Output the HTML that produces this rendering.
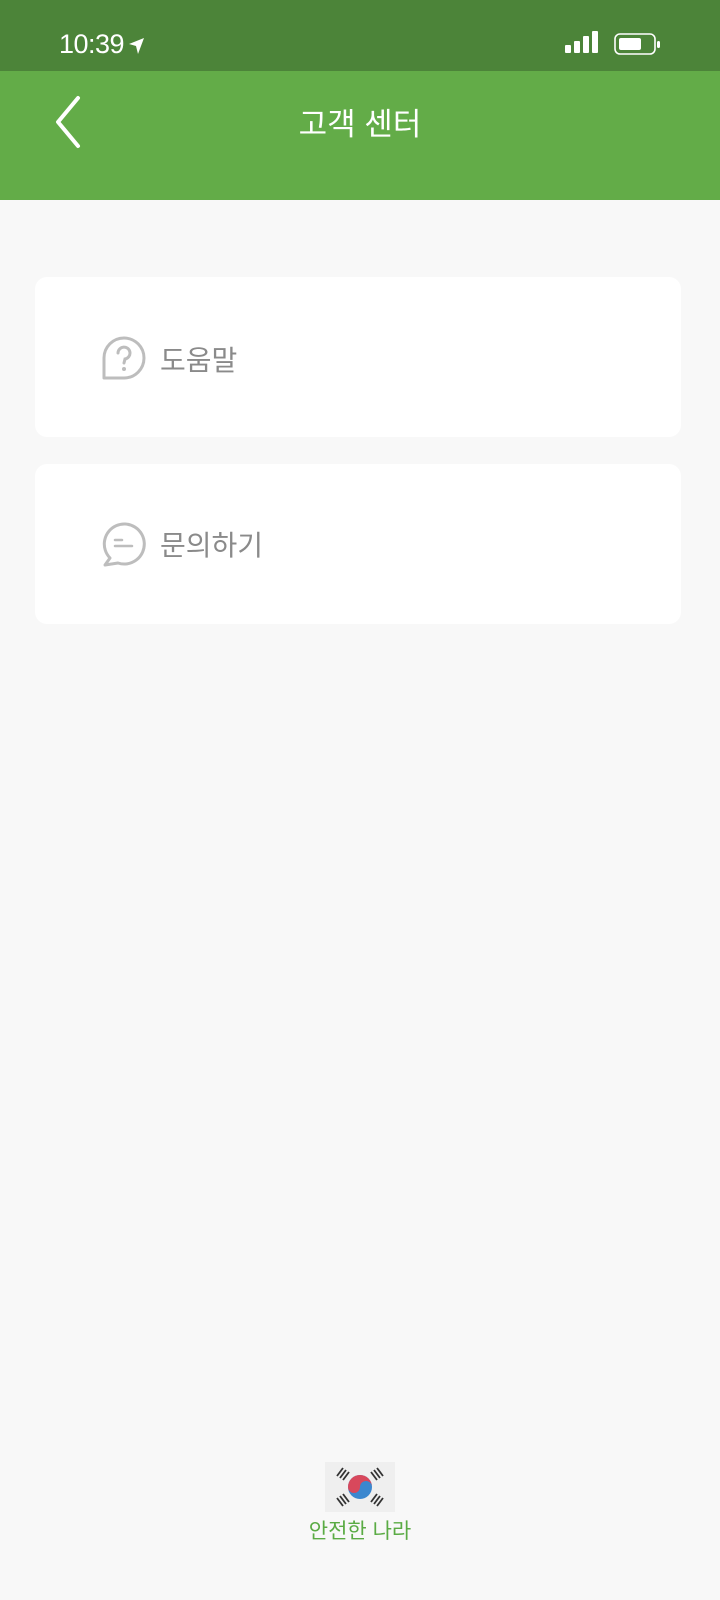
<!DOCTYPE html>
<html><head><meta charset="utf-8"><style>
*{margin:0;padding:0;box-sizing:border-box}
body{width:720px;height:1600px;background:#f8f8f8;font-family:"Liberation Sans","Noto Sans CJK KR",sans-serif;position:relative;overflow:hidden}
.status{position:absolute;left:0;top:0;width:720px;height:71px;background:#4c8439}
.header{position:absolute;left:0;top:71px;width:720px;height:129px;background:#63ac48}
.title{position:absolute;left:0;right:0;top:103px;text-align:center;color:#fff;font-size:31px;line-height:44px}
.time{position:absolute;left:59px;top:26px;color:#fff;font-size:27px;line-height:36px;letter-spacing:-0.5px}
.card{position:absolute;left:35px;width:646px;height:160px;background:#fff;border-radius:12px}
.lbl{position:absolute;left:160px;color:#8a8a8a;font-size:28px;line-height:40px}
.foot{position:absolute;left:0;right:0;top:1516px;text-align:center;color:#5aab44;font-size:21px;line-height:32px}
</style></head><body>
<div class="status"></div>
<div class="time">10:39</div>
<svg style="position:absolute;left:128px;top:37px" width="18" height="18" viewBox="0 0 18 18"><path d="M16 1 L1 7 L8 9 L10 17 Z" fill="#fff"/></svg>
<svg style="position:absolute;left:565px;top:30px" width="36" height="25"><rect x="0" y="15" width="6" height="8" rx="1" fill="#fff"/><rect x="9" y="11" width="6" height="12" rx="1" fill="#fff"/><rect x="18" y="6" width="6" height="17" rx="1" fill="#fff"/><rect x="27" y="1" width="6" height="22" rx="1" fill="#fff"/></svg>
<svg style="position:absolute;left:614px;top:32px" width="48" height="24"><rect x="1" y="2" width="40" height="20" rx="5" fill="none" stroke="#fff" stroke-width="1.6"/><rect x="5" y="6" width="22" height="12" rx="2" fill="#fff"/><rect x="43" y="9" width="3" height="7" rx="1.5" fill="#fff"/></svg>
<div class="header"></div>
<svg style="position:absolute;left:50px;top:94px" width="36" height="56"><path d="M28 4 L8 28 L28 52" fill="none" stroke="#fff" stroke-width="4" stroke-linecap="round" stroke-linejoin="round"/></svg>
<div class="title">고객 센터</div>

<div class="card" style="top:277px"></div>
<svg style="position:absolute;left:102px;top:336px" width="45" height="44" viewBox="0 0 45 44"><path d="M2 42 L2 22 A20 20 0 1 1 22 42 Z" fill="none" stroke="#bdbdbd" stroke-width="3" stroke-linejoin="round"/><path d="M16 17 A6 6 0 1 1 23 23 L22 27" fill="none" stroke="#bdbdbd" stroke-width="3" stroke-linecap="round"/><circle cx="22" cy="33" r="2" fill="#bdbdbd"/></svg>
<div class="lbl" style="top:341px">도움말</div>

<div class="card" style="top:464px"></div>
<svg style="position:absolute;left:101px;top:521px" width="47" height="47" viewBox="0 0 47 47"><path d="M9 37 A20 20 0 1 1 17 42 L4 44 Z" fill="none" stroke="#bdbdbd" stroke-width="3" stroke-linejoin="round"/><path d="M14 19 H21 M14 25 H31" stroke="#bdbdbd" stroke-width="2.5" stroke-linecap="round"/></svg>
<div class="lbl" style="top:526px">문의하기</div>

<svg style="position:absolute;left:325px;top:1462px" width="70" height="50" viewBox="0 0 70 50"><rect width="70" height="50" fill="#efefef"/><circle cx="35" cy="25" r="12" fill="#3b87cf"/><path d="M23 25 A12 12 0 0 1 47 25 A6 6 0 0 0 35 25 A6 6 0 0 1 23 25 Z" fill="#d8485c"/><g stroke="#333" stroke-width="1.8"><path d="M12 14 L18 6 M15 16 L21 8 M18 18 L24 10"/><path d="M46 10 L52 18 M49 8 L55 16 M52 6 L58 14"/><path d="M12 36 L18 44 M15 34 L21 42 M18 32 L24 40"/><path d="M46 40 L52 32 M49 42 L55 34 M52 44 L58 36"/></g></svg>
<div class="foot">안전한 나라</div>
</body></html>
